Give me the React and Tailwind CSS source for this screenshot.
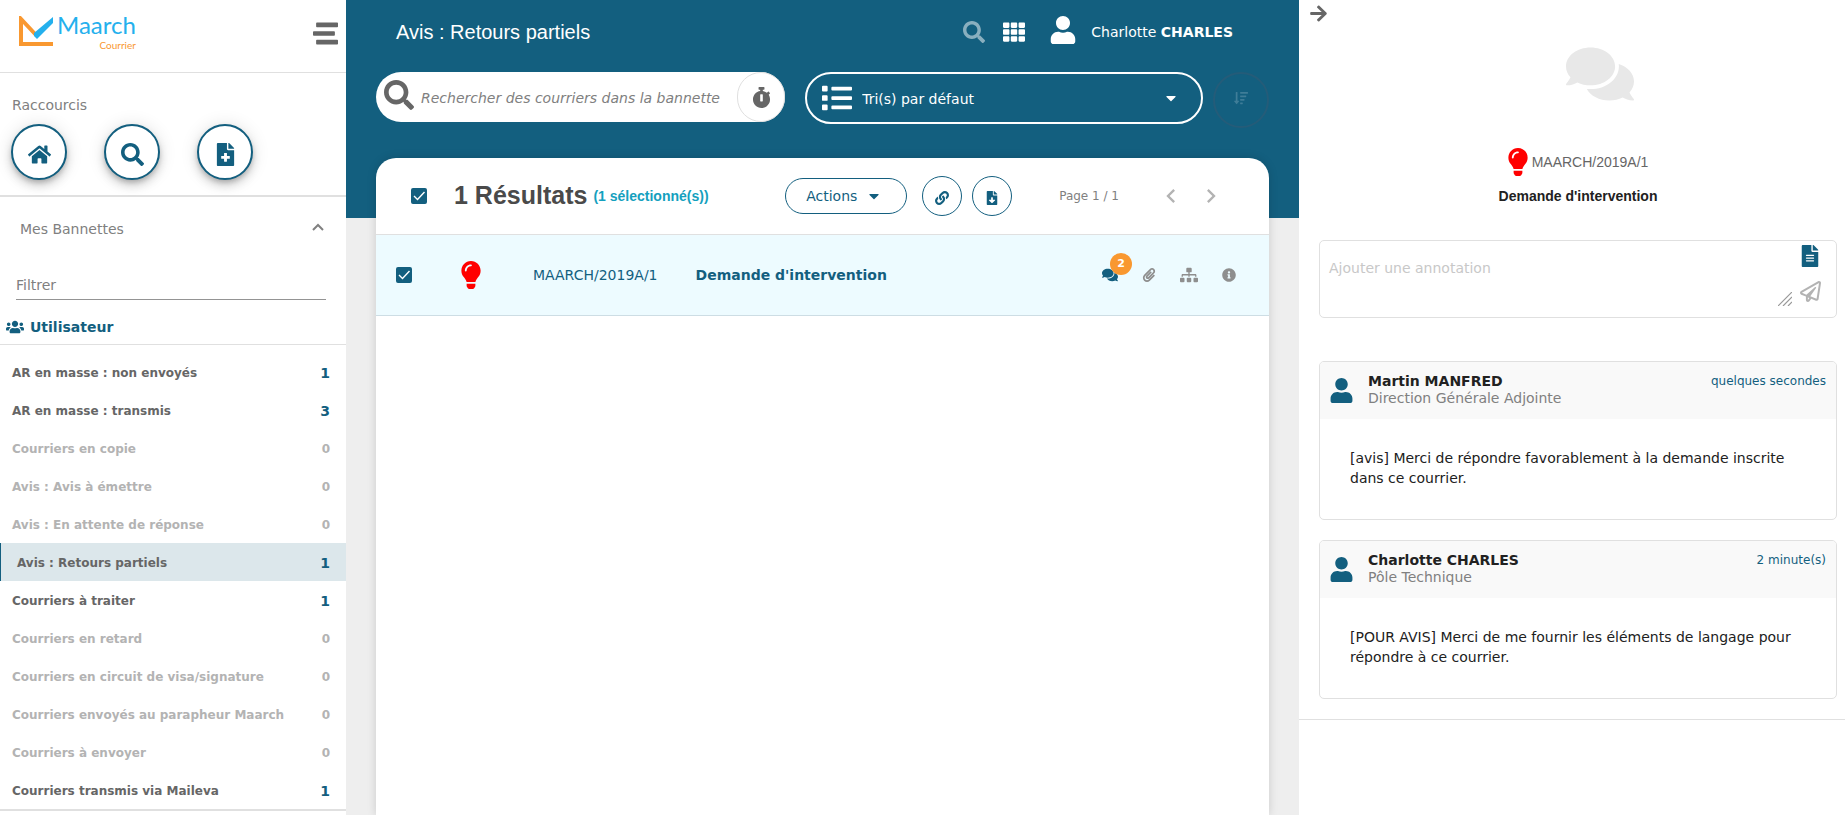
import { useState } from "react";
import {
  FaArrowRight,
  FaCaretDown,
  FaComments,
  FaFileAlt,
  FaFileDownload,
  FaFileMedical,
  FaHome,
  FaInfoCircle,
  FaLightbulb,
  FaLink,
  FaList,
  FaPaperclip,
  FaRegPaperPlane,
  FaSearch,
  FaSitemap,
  FaSortAmountDown,
  FaStopwatch,
  FaStream,
  FaTh,
  FaUser,
  FaUsers,
} from "react-icons/fa";
import { MdChevronLeft, MdChevronRight } from "react-icons/md";

const baskets = [
  { label: "AR en masse : non envoyés", count: 1 },
  { label: "AR en masse : transmis", count: 3 },
  { label: "Courriers en copie", count: 0 },
  { label: "Avis : Avis à émettre", count: 0 },
  { label: "Avis : En attente de réponse", count: 0 },
  { label: "Avis : Retours partiels", count: 1 },
  { label: "Courriers à traiter", count: 1 },
  { label: "Courriers en retard", count: 0 },
  { label: "Courriers en circuit de visa/signature", count: 0 },
  { label: "Courriers envoyés au parapheur Maarch", count: 0 },
  { label: "Courriers à envoyer", count: 0 },
  { label: "Courriers transmis via Maileva", count: 1 },
];

const shortcuts = [
  { label: "Accueil", icon: FaHome },
  { label: "Rechercher", icon: FaSearch },
  { label: "Enregistrer un courrier", icon: FaFileMedical },
];

const notes = [
  {
    author: "Martin MANFRED",
    entity: "Direction Générale Adjointe",
    date: "quelques secondes",
    text: "[avis] Merci de répondre favorablement à la demande inscrite dans ce courrier.",
  },
  {
    author: "Charlotte CHARLES",
    entity: "Pôle Technique",
    date: "2 minute(s)",
    text: "[POUR AVIS] Merci de me fournir les éléments de langage pour répondre à ce courrier.",
  },
];

function Logo() {
  return (
    <div className="flex items-start">
      <svg viewBox="0 0 34 30" className="mt-[5px] h-[30px] w-[34px]">
        <path d="M34 28H2V3l15 16" fill="none" stroke="#f99830" strokeWidth="4" />
        <path d="M15 17L34 1v6L18 23l-3-3z" fill="#24b0ed" />
      </svg>
      <div className="ml-1 flex flex-col items-end font-['Lato']">
        <span className="text-[24px] leading-7 text-[#24b0ed]">Maarch</span>
        <span className="text-[10px] leading-3 text-[#f99830]">Courrier</span>
      </div>
    </div>
  );
}

function Checkbox({ label, checked, onChange }) {
  return (
    <label className="relative block size-4">
      <input
        type="checkbox"
        aria-label={label}
        checked={checked}
        onChange={onChange}
        className="peer block size-4 appearance-none rounded-xs border-2 border-[#757575] checked:border-[#135f7f] checked:bg-[#135f7f]"
      />
      <svg viewBox="0 0 16 16" className="pointer-events-none absolute inset-0 hidden peer-checked:block">
        <path d="M3 8l3.500 3.500L13.500 4" fill="none" stroke="white" strokeWidth="1.400" />
      </svg>
    </label>
  );
}

function Sidebar() {
  const [current, setCurrent] = useState(5);

  return (
    <nav className="w-[346px] shrink-0 bg-white">
      <div className="flex h-[73px] items-start justify-between border-b border-[#e0e0e0] pt-[11px] pr-2 pl-[19px]">
        <Logo />
        <button aria-label="Menu" className="mt-2.5 text-[#666]">
          <FaStream className="size-[25px] -scale-x-100" />
        </button>
      </div>

      <section className="border-b-2 border-[#e0e0e0] px-[11px] pt-[22px] pb-[15px]">
        <h2 className="pl-px text-[14px] leading-5 text-[#808080]">Raccourcis</h2>
        <div className="mt-[9px] flex gap-[37px]">
          {shortcuts.map(({ label, icon: Icon }) => (
            <button
              key={label}
              aria-label={label}
              className="flex size-14 items-center justify-center rounded-full border-2 border-[#135f7f] bg-white pt-1 text-[#135f7f] shadow-[0_3px_5px_-1px_rgba(0,0,0,0.2),0_6px_10px_rgba(0,0,0,0.14),0_1px_18px_rgba(0,0,0,0.12)]"
            >
              <Icon className="size-[23px]" />
            </button>
          ))}
        </div>
      </section>

      <section className="border-b-2 border-[#e0e0e0]">
        <button className="flex h-16 w-full items-center justify-between pr-[22px] pl-5 text-[14px] text-[#808080]">
          Mes Bannettes
          <svg viewBox="0 0 12 8" className="mb-1 h-2 w-3">
            <path d="M1 7l5-5 5 5" fill="none" stroke="currentColor" strokeWidth="2" />
          </svg>
        </button>
        <div className="px-4">
          <input
            aria-label="Filtrer"
            placeholder="Filtrer"
            className="mt-2 block h-[31px] w-full max-w-[310px] border-b border-[#949494] pt-0.5 text-[14px] outline-none placeholder:text-[#808080]"
          />
        </div>
        <h3 className="mt-2.5 flex h-[35px] items-center gap-1.5 border-b border-[#e0e0e0] pl-1.5 text-[14px] font-bold text-[#135f7f]">
          <FaUsers className="size-[18px]" />
          Utilisateur
        </h3>
        <ul className="pt-2">
          {baskets.map((basket, i) => (
            <li key={basket.label}>
              <button
                onClick={() => setCurrent(i)}
                className={
                  "flex h-[38px] w-full items-center justify-between pt-0.5 pr-4 text-[12px] font-bold " +
                  (i === current ? "border-l border-[#135f7f] bg-[#dce7eb] pl-4 " : "pl-3 ") +
                  (basket.count > 0 ? "text-[#666]" : "text-[#b3b3b3]")
                }
              >
                {basket.label}
                <span className={basket.count > 0 ? "text-[14px] text-[#135f7f]" : ""}>{basket.count}</span>
              </button>
            </li>
          ))}
        </ul>
      </section>
    </nav>
  );
}

function Header() {
  return (
    <header className="bg-[#135f7f] px-[30px] pb-[90px] text-white">
      <div className="flex h-16 items-center pr-9 pl-5">
        <h1 className="flex-1 font-['Liberation_Sans'] text-[20px]">Avis : Retours partiels</h1>
        <button aria-label="Rechercher" className="mr-[18px] opacity-50">
          <FaSearch className="size-[22px]" />
        </button>
        <button aria-label="Applications" className="mr-6">
          <FaTh className="size-[22px]" />
        </button>
        <FaUser className="mr-3.5 mb-1 size-7" />
        <span className="text-[14px]">
          Charlotte <b>CHARLES</b>
        </span>
      </div>

      <div className="flex items-start pt-2">
        <div className="flex h-[50px] flex-[18] items-center rounded-full bg-white pl-2">
          <FaSearch className="mb-1 size-[30px] shrink-0 text-[#666]" />
          <input
            aria-label="Rechercher des courriers dans la bannette"
            placeholder="Rechercher des courriers dans la bannette"
            className="min-w-0 flex-1 pt-0.5 pl-[7px] text-[14px] text-[#666] italic outline-none placeholder:text-[#808080]"
          />
          <button
            aria-label="Historique"
            className="flex h-[50px] w-12 items-center justify-center rounded-full border border-[#e0e0e0] text-[#666]"
          >
            <FaStopwatch className="size-[21px]" />
          </button>
        </div>

        <label className="relative ml-5 flex h-[52px] flex-[17] items-center rounded-full border-2 border-white pl-[15px]">
          <FaList className="mr-2.5 size-[30px] shrink-0" />
          <select
            aria-label="Tri"
            className="h-full min-w-0 flex-1 appearance-none bg-transparent pt-0.5 text-[14px] outline-none"
          >
            <option>Tri(s) par défaut</option>
          </select>
          <FaCaretDown className="pointer-events-none absolute right-[22px] size-4" />
        </label>

        <button
          disabled
          aria-label="Ordre"
          className="ml-2.5 flex size-14 items-center justify-center rounded-full border-2 border-[#245c79] pb-1 text-[#3f7d98]"
        >
          <FaSortAmountDown className="size-3.5" />
        </button>
      </div>
    </header>
  );
}

function MailList() {
  const [selected, setSelected] = useState(true);
  const toggle = () => setSelected(!selected);

  return (
    <section className="mx-[30px] -mt-15 flex-1 rounded-t-[20px] bg-white shadow-[0_0_10px_rgba(0,0,0,0.15)]">
      <div className="flex h-[77px] items-center border-b border-[#e0e0e0] pr-11 pl-[35px]">
        <Checkbox label="Tout sélectionner" checked={selected} onChange={toggle} />
        <h2 className="ml-[27px] font-['Liberation_Sans'] text-[25px] font-bold text-[#4a4a4a]">1 Résultats</h2>
        <span className="ml-1.5 flex-1 font-['Liberation_Sans'] text-[14px] font-bold text-[#14a0be]">
          ({selected ? 1 : 0} sélectionné(s))
        </span>
        <button className="flex h-9 w-[122px] items-center justify-between rounded-full border border-[#135f7f] pr-6 pl-5 text-[14px] text-[#135f7f]">
          Actions
          <FaCaretDown className="size-4" />
        </button>
        <button
          aria-label="Lier"
          className="ml-[15px] flex size-10 items-center justify-center rounded-full border border-[#135f7f] pt-1 text-[#135f7f]"
        >
          <FaLink className="size-3.5" />
        </button>
        <button
          aria-label="Exporter"
          className="ml-2.5 flex size-10 items-center justify-center rounded-full border border-[#135f7f] pt-1 text-[#135f7f]"
        >
          <FaFileDownload className="size-3.5" />
        </button>
        <span className="ml-[47px] text-[12px] text-[#808080]">Page 1 / 1</span>
        <button disabled aria-label="Page précédente" className="ml-[38px] text-[#b3b3b3]">
          <MdChevronLeft className="size-7" />
        </button>
        <button disabled aria-label="Page suivante" className="ml-3 text-[#b3b3b3]">
          <MdChevronRight className="size-7" />
        </button>
      </div>

      <div className="flex h-[81px] items-center border-b border-[#cddde4] bg-[#edfbff] pr-[33px] pl-5 text-[14px] text-[#135f7f]">
        <Checkbox label="Sélectionner MAARCH/2019A/1" checked={selected} onChange={toggle} />
        <FaLightbulb className="ml-[45px] size-7 text-[red]" />
        <span className="ml-12">MAARCH/2019A/1</span>
        <b className="ml-[38px] flex-1">Demande d'intervention</b>
        <div className="flex items-center gap-6 text-[#8e8e8e]">
          <button aria-label="Annotations" className="relative text-[#135f7f]">
            <FaComments className="size-4" />
            <span className="absolute -top-3.5 left-2 flex size-[22px] items-center justify-center rounded-full bg-[#f99830] text-[11px] font-bold text-white">
              2
            </span>
          </button>
          <button aria-label="Pièces jointes">
            <FaPaperclip className="size-3.5" />
          </button>
          <button aria-label="Circuit">
            <FaSitemap className="size-[18px]" />
          </button>
          <button aria-label="Informations">
            <FaInfoCircle className="size-3.5" />
          </button>
        </div>
      </div>
    </section>
  );
}

function NotesPanel() {
  return (
    <aside className="w-[546px] shrink-0 bg-white text-[14px]">
      <div className="border-b border-[#e0e0e0] pr-2 pb-5 pl-5">
        <button aria-label="Fermer" className="-ml-2.5 block pt-1 text-[#666]">
          <FaArrowRight className="size-[19px]" />
        </button>
        <FaComments className="mx-auto mt-[17px] size-[68px] translate-x-[22px] text-[#e8e8e8]" />

        <div className="mt-10 flex items-center justify-center gap-1 font-['Liberation_Sans'] text-[#666]">
          <FaLightbulb className="h-7 w-5 text-[red]" />
          MAARCH/2019A/1
        </div>
        <h2 className="mt-2.5 text-center font-['Liberation_Sans'] leading-5 font-bold text-[#212121]">
          Demande d'intervention
        </h2>

        <div className="mt-[34px] flex h-[78px] rounded-[5px] border border-[#e0e0e0]">
          <div className="relative flex-1">
            <textarea
              aria-label="Ajouter une annotation"
              placeholder="Ajouter une annotation"
              className="block h-full w-full resize-none px-[9px] pt-[17px] leading-5 outline-none placeholder:text-[#c8c8c8]"
            />
            <svg viewBox="0 0 14 14" className="absolute right-0 bottom-[11px] size-3.5" stroke="#999" strokeWidth="1.200">
              <path d="M0 14L14 0M5 14l9-9M10 14l4-4" fill="none" />
            </svg>
          </div>
          <div className="flex w-11 flex-col items-center gap-3.5 pt-1 pr-2">
            <button aria-label="Modèles" className="text-[#135f7f]">
              <FaFileAlt className="size-[22px]" />
            </button>
            <button aria-label="Envoyer" className="text-[#b3b3b3]">
              <FaRegPaperPlane className="size-[21px]" />
            </button>
          </div>
        </div>

        <div className="mt-[43px] flex flex-col gap-5">
          {notes.map((note) => (
            <article key={note.author} className="overflow-hidden rounded-[5px] border border-[#e0e0e0]">
              <header className="flex h-[57px] items-start bg-[#f9f9f9] pt-[11px] pr-2.5 pl-[9px]">
                <FaUser className="mt-[5px] size-[25px] text-[#135f7f]" />
                <div className="ml-3.5 flex-1 leading-[17px]">
                  <h3 className="font-bold text-[#212121]">{note.author}</h3>
                  <p className="text-[#808080]">{note.entity}</p>
                </div>
                <time className="text-[12px] leading-4 text-[#135f7f]">{note.date}</time>
              </header>
              <p className="px-[30px] pt-[29px] pb-[31px] leading-5 text-[#212121]">{note.text}</p>
            </article>
          ))}
        </div>
      </div>
    </aside>
  );
}

export default function App() {
  return (
    <div className="flex min-h-screen bg-white font-['DejaVu_Sans',sans-serif]">
      <Sidebar />
      <main className="flex min-w-0 flex-1 flex-col bg-[#eee]">
        <Header />
        <MailList />
      </main>
      <NotesPanel />
    </div>
  );
}
